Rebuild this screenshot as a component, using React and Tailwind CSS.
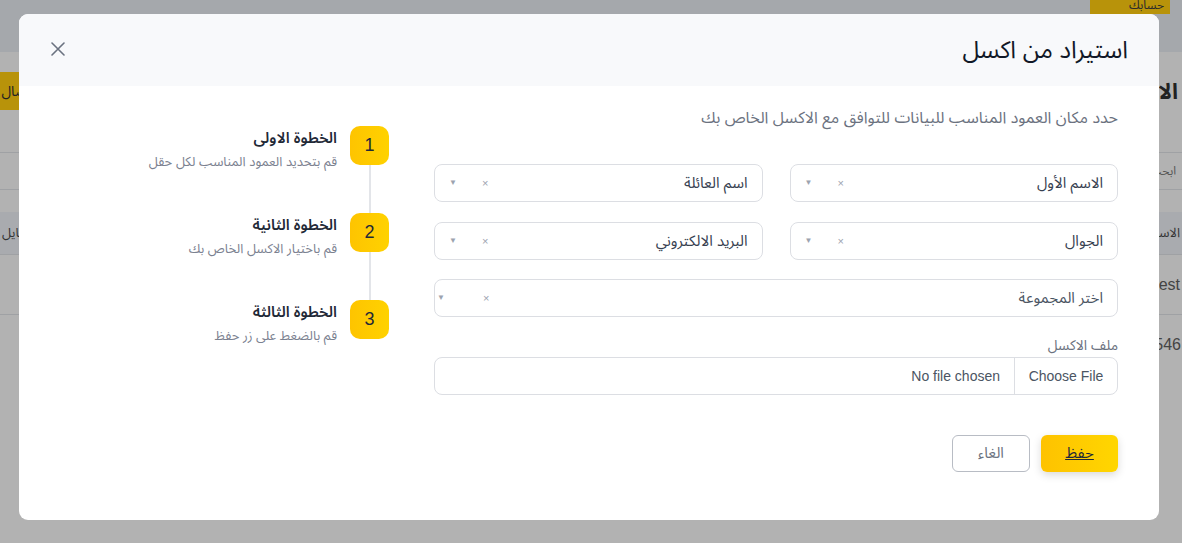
import React from "react";

const font = { fontFamily: '"Liberation Sans", "Noto Sans Arabic", "DejaVu Sans", sans-serif' };

const Select = ({ label, placeholder, wide }) => (
  <div className="h-[38px] rounded-[8px] border border-[#dcdee3] bg-white flex items-center justify-between">
    <span className={"pr-[14px] text-[15px] " + (placeholder ? "text-[#4b5563]" : "text-[#374151]")}>{label}</span>
    <div className="flex items-center h-full" dir="ltr">
      <span className={wide ? "ml-[2px] text-[8px] text-[#9ca3af]" : "ml-[14px] text-[8px] text-[#9ca3af]"}>▼</span>
      <span className={wide ? "ml-[38px] text-[11px] text-[#9ca3af]" : "ml-[25px] text-[11px] text-[#9ca3af]"}>×</span>
    </div>
  </div>
);

const StepBox = ({ n }) => (
  <div className="w-[39px] h-[39px] shrink-0 rounded-[10px] bg-gradient-to-l from-[#ffd200] to-[#fec400] flex items-center justify-center text-[18px] text-[#1f2937]">
    {n}
  </div>
);

const Step = ({ n, title, desc }) => (
  <div className="flex items-start gap-[13px] h-[39px]">
    <StepBox n={n} />
    <div className="pt-[2px] whitespace-nowrap">
      <div className="text-[15px] font-semibold text-[#1f2937] leading-[20px]">{title}</div>
      <div className="mt-[5px] text-[13px] text-[#7b8190] leading-[18px]">{desc}</div>
    </div>
  </div>
);

const StepLine = () => (
  <div className="flex h-[48px]">
    <div className="w-[39px] flex justify-center">
      <div className="w-[2px] h-full bg-[#e3e5e9]" />
    </div>
  </div>
);

const Background = () => (
  <div className="w-[1182px] h-[543px] bg-[#b2b2b2] flex flex-col overflow-hidden" dir="rtl">
    <div className="h-[52px] bg-[#a5a8ac] flex">
      <div className="mr-[12px] w-[80px] h-[14px] bg-[#b8930a] overflow-hidden text-[12px] leading-[10px] text-[#2a2a2a] pr-[6px]">
        حسابك
      </div>
    </div>
    <div className="h-[20px]" />
    <div className="h-[38px] flex items-center justify-between">
      <span className="pr-[4px] text-[22px] font-bold text-[#222]">الاستيراد</span>
      <div className="w-[40px] h-full bg-[#b8930a] flex items-center text-[14px] text-[#222] pr-[4px]">اتصال</div>
    </div>
    <div className="h-[42px]" />
    <div className="h-[38px] border-y border-[#9fa1a4] flex items-center text-[12px] text-[#555] pr-[6px]">
      ابحث ...
    </div>
    <div className="h-[22px]" />
    <div className="h-[43px] bg-[#a9abaf] border-b border-[#9fa1a4] flex items-center justify-between text-[13px] text-[#333]">
      <span className="pr-[2px]">الاسم</span>
      <span className="pl-[2px]">الموبايل</span>
    </div>
    <div className="h-[60px] border-b border-[#9fa1a4] flex items-center text-[16px] text-[#444] pr-[2px]">
      <span dir="ltr">test</span>
    </div>
    <div className="h-[60px] flex items-center text-[16px] text-[#444] pr-[1px]">
      <span dir="ltr">0546</span>
    </div>
  </div>
);

const App = () => {
  return (
    <div className="relative w-[1182px] h-[543px] overflow-hidden" style={font}>
      <Background />
      <div className="absolute left-[19px] top-[14px] w-[1140px] h-[506px] rounded-[9px] bg-white overflow-hidden flex flex-col" dir="rtl">
        <div className="h-[72px] bg-[#f8f9fb] flex items-center justify-between px-[31px]">
          <h2 className="text-[24px] text-[#111827]">استيراد من اكسل</h2>
          <svg width="14" height="14" viewBox="0 0 14 14" className="ml-[1px] mb-[2px]">
            <path d="M1 1L13 13M13 1L1 13" stroke="#6b7280" strokeWidth="1.6" strokeLinecap="round" />
          </svg>
        </div>
        <div className="flex pt-[22px] pr-[41px]">
          <div className="w-[684px]">
            <p className="text-[16px] leading-[20px] text-[#6b7280]">حدد مكان العمود المناسب للبيانات للتوافق مع الاكسل الخاص بك</p>
            <div className="mt-[36px] grid grid-cols-2 gap-x-[27px] gap-y-[20px]">
              <Select label="الاسم الأول" />
              <Select label="اسم العائلة" />
              <Select label="الجوال" />
              <Select label="البريد الالكتروني" />
            </div>
            <div className="mt-[19px]">
              <Select label="اختر المجموعة" placeholder wide />
            </div>
            <div className="mt-[19px] text-[14px] leading-[18px] text-[#6b7280]">ملف الاكسل</div>
            <div className="mt-[3px] h-[38px] rounded-[8px] border border-[#dcdee3] flex items-center text-[14px] text-[#4b5563]">
              <div className="h-full w-[103px] border-l border-[#dcdee3] flex items-center justify-center" dir="ltr">Choose File</div>
              <div className="pr-[14px]" dir="ltr">No file chosen</div>
            </div>
            <div className="mt-[40px] flex gap-[11px]">
              <button className="w-[77px] h-[37px] rounded-[6px] bg-gradient-to-r from-[#fec200] to-[#ffd600] shadow-[0_3px_8px_rgba(0,0,0,0.15)] text-[15px] text-[#1f2937] underline">
                حفظ
              </button>
              <button className="w-[78px] h-[37px] rounded-[6px] border border-[#b8bcc4] bg-white text-[15px] text-[#6b7280]">
                الغاء
              </button>
            </div>
          </div>
          <div className="mr-[45px] pt-[18px]">
            <Step n="1" title="الخطوة الاولى" desc="قم بتحديد العمود المناسب لكل حقل" />
            <StepLine />
            <Step n="2" title="الخطوة الثانية" desc="قم باختيار الاكسل الخاص بك" />
            <StepLine />
            <Step n="3" title="الخطوة الثالثة" desc="قم بالضغط على زر حفظ" />
          </div>
        </div>
      </div>
    </div>
  );
};

export default App;
